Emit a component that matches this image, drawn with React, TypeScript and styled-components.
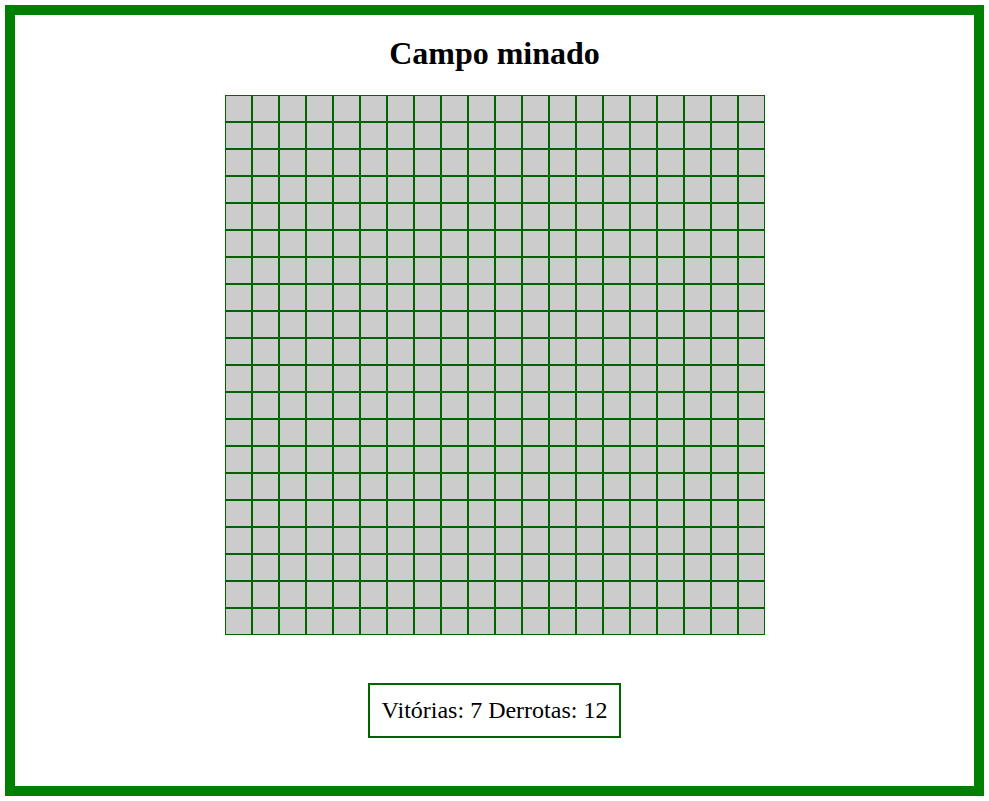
import React from "react";
import styled, { createGlobalStyle } from "styled-components";

const Global = createGlobalStyle`
  html, body { margin: 0; padding: 0; background: #fff; }
  body { font-family: "Liberation Serif", "Times New Roman", serif; color: #000; }
`;

const Frame = styled.div`
  margin: 5px;
  height: calc(100vh - 10px);
  box-sizing: border-box;
  border: 10px solid #008000;
  display: flex;
  flex-direction: column;
  align-items: center;
`;

const Title = styled.h1`
  font-size: 32px;
  font-weight: bold;
  margin: 20px 0 23px;
  line-height: 37px;
`;

const Board = styled.div`
  display: grid;
  grid-template-columns: repeat(20, 27px);
  grid-auto-rows: 27px;
`;

const Cell = styled.div`
  width: 25px;
  height: 25px;
  background: #cccccc;
  border: 1px solid #006400;
`;

const Stats = styled.div`
  margin-top: 48px;
  border: 2px solid #006400;
  padding: 12px 12px;
  font-size: 24px;
  line-height: 27px;
`;

export default function App() {
  const cells = Array.from({ length: 400 }, (_, i) => i);
  return (
    <>
      <Global />
      <Frame>
        <Title>Campo minado</Title>
        <Board>
          {cells.map((i) => (
            <Cell key={i} />
          ))}
        </Board>
        <Stats>Vitórias: 7 Derrotas: 12</Stats>
      </Frame>
    </>
  );
}
